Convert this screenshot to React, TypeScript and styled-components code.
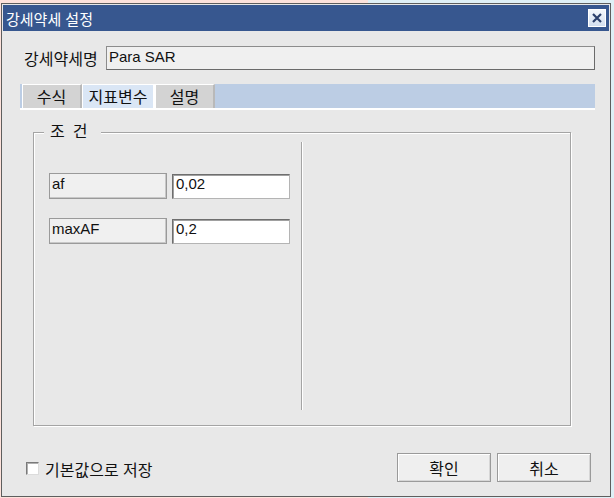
import React, { useState } from 'react';
import styled, { createGlobalStyle } from 'styled-components';

const uiFont = `"Liberation Sans", "Noto Sans CJK KR", sans-serif`;

const GlobalStyle = createGlobalStyle`
  html, body {
    margin: 0;
    padding: 0;
  }
  body {
    background: #fbe3dd;
    font-family: ${uiFont};
  }
  * {
    box-sizing: border-box;
  }
`;

const Desktop = styled.div`
  width: 614px;
  height: 498px;
  padding: 3px 0 0 1px;
  background: linear-gradient(90deg, #fde2db 0 60%, #dff0f6 60% 100%);
`;

const Window = styled.div`
  width: 610px;
  height: 494px;
  border: 1px solid #5e5e5e;
  padding: 1px;
  background: #e8e8e8;
  display: flex;
  flex-direction: column;
`;

const TitleBar = styled.div`
  height: 26px;
  flex: none;
  background: #37578f;
  color: #ffffff;
  font-size: 15px;
  display: flex;
  align-items: center;
  justify-content: space-between;
  padding: 0 3px 0 3px;
`;

const CloseButton = styled.div`
  width: 18px;
  height: 18px;
  background: linear-gradient(#f4f7fb, #d3dff0);
  border: 1px solid #ffffff;
  display: flex;
  align-items: center;
  justify-content: center;
`;

const Body = styled.div`
  flex: 1;
  display: flex;
  flex-direction: column;
  padding: 15px 14px 0 17px;
  color: #111;
`;

const NameRow = styled.div`
  display: flex;
  align-items: center;
  height: 24px;
  padding-left: 4px;
`;

const NameLabel = styled.span`
  width: 82px;
  font-size: 16px;
  flex: none;
`;

const NameInput = styled.div`
  flex: 1;
  height: 24px;
  background: #f0f0f0;
  border: 1px solid #8c8c8c;
  border-right-color: #6a6a6a;
  border-bottom-color: #6a6a6a;
  font-size: 15px;
  padding: 1px 0 0 2px;
  line-height: 18px;
`;

const TabStrip = styled.div`
  margin-top: 14px;
  height: 26px;
  display: flex;
  background: #bccde4;
  padding-left: 2px;
  border-bottom: 2px solid #ffffff;
`;

const Tab = styled.div<{ active?: boolean; w: number }>`
  width: ${p => p.w}px;
  height: 24px;
  background: ${p => (p.active ? '#dae6f5' : '#d3d3d3')};
  border-top: 1px solid #ffffff;
  border-left: 1px solid #ffffff;
  border-right: 2px solid ${p => (p.active ? '#ffffff' : '#b9b9b9')};
  font-size: 16px;
  display: flex;
  align-items: center;
  justify-content: center;
  padding-bottom: 2px;
`;

const GroupBox = styled.div`
  position: relative;
  margin: 22px 0 0 13px;
  width: 538px;
  height: 294px;
  border: 1px solid #a4a4a4;
  box-shadow: inset 1px 1px 0 #ffffff, 1px 1px 0 #ffffff;
  display: flex;
`;

const Legend = styled.span`
  position: absolute;
  top: -10px;
  left: 10px;
  padding: 0 6px;
  background: #e8e8e8;
  font-size: 16px;
  letter-spacing: 8px;
  line-height: 18px;
`;

const LeftPane = styled.div`
  width: 268px;
  margin: 9px 0 15px 0;
  border-right: 1px solid #a4a4a4;
  box-shadow: 1px 0 0 #ffffff;
  padding: 31px 0 0 15px;
  display: flex;
  flex-direction: column;
  gap: 19px;
`;

const ParamRow = styled.div`
  display: flex;
  gap: 5px;
`;

const ParamName = styled.div`
  width: 118px;
  height: 26px;
  background: #f0f0f0;
  border: 1px solid #9a9a9a;
  box-shadow: inset -1px -1px 0 #c8c8c8;
  font-size: 15px;
  padding: 1px 0 0 2px;
  line-height: 18px;
`;

const ParamValue = styled.div`
  width: 118px;
  height: 25px;
  margin-top: 1px;
  background: #ffffff;
  border: 1px solid #6e6e6e;
  border-right-color: #b4b4b4;
  border-bottom-color: #b4b4b4;
  box-shadow: inset 1px 1px 0 #a0a0a0;
  font-size: 15px;
  padding: 0 0 0 3px;
  line-height: 18px;
`;

const Footer = styled.div`
  margin-top: 27px;
  display: flex;
  align-items: center;
  padding-left: 6px;
`;

const CheckLabel = styled.label`
  display: flex;
  align-items: center;
  gap: 6px;
  font-size: 16px;
  margin-top: 2px;
  cursor: pointer;
`;

const CheckBox = styled.span<{ on: boolean }>`
  width: 13px;
  height: 13px;
  background: #ffffff;
  border: 1px solid #7a7a7a;
  border-right-color: #dcdcdc;
  border-bottom-color: #dcdcdc;
  box-shadow: inset 1px 1px 0 #b0b0b0;
  display: flex;
  align-items: center;
  justify-content: center;
  font-size: 11px;
  line-height: 1;
`;

const Buttons = styled.div`
  margin-left: auto;
  display: flex;
  gap: 6px;
  margin-right: 4px;
`;

const Button = styled.button`
  width: 94px;
  height: 29px;
  background: #efefef;
  border: 1px solid #9a9a9a;
  box-shadow: inset 1px 1px 0 #ffffff, inset -1px -1px 0 #d6d6d6;
  font-family: ${uiFont};
  font-size: 16px;
  color: #111;
  padding: 0;
`;

export default function App() {
  const [saveDefault, setSaveDefault] = useState(false);
  const params = [
    { name: 'af', value: '0,02' },
    { name: 'maxAF', value: '0,2' },
  ];

  return (
    <>
      <GlobalStyle />
      <Desktop>
        <Window>
          <TitleBar>
            <span>강세약세 설정</span>
            <CloseButton>
              <svg width="12" height="12" viewBox="0 0 12 12">
                <path d="M2 2 L10 10 M10 2 L2 10" stroke="#2b3f6b" strokeWidth="2.2" />
              </svg>
            </CloseButton>
          </TitleBar>
          <Body>
            <NameRow>
              <NameLabel>강세약세명</NameLabel>
              <NameInput>Para SAR</NameInput>
            </NameRow>
            <TabStrip>
              <Tab w={60}>수식</Tab>
              <Tab w={73} active>지표변수</Tab>
              <Tab w={60}>설명</Tab>
            </TabStrip>
            <GroupBox>
              <Legend>조건</Legend>
              <LeftPane>
                {params.map(p => (
                  <ParamRow key={p.name}>
                    <ParamName>{p.name}</ParamName>
                    <ParamValue>{p.value}</ParamValue>
                  </ParamRow>
                ))}
              </LeftPane>
            </GroupBox>
            <Footer>
              <CheckLabel onClick={() => setSaveDefault(!saveDefault)}>
                <CheckBox on={saveDefault}>{saveDefault ? '✓' : ''}</CheckBox>
                기본값으로 저장
              </CheckLabel>
              <Buttons>
                <Button>확인</Button>
                <Button>취소</Button>
              </Buttons>
            </Footer>
          </Body>
        </Window>
      </Desktop>
    </>
  );
}
